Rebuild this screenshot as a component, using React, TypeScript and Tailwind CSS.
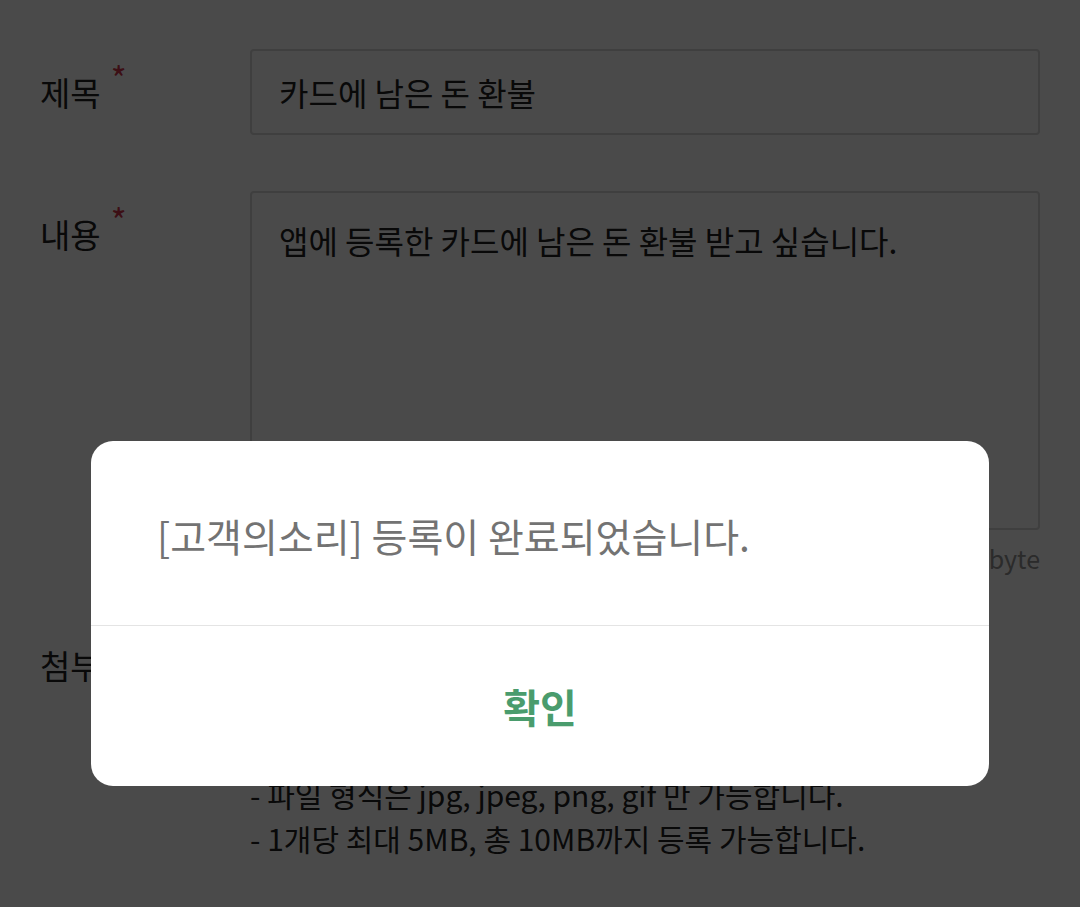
import React from "react";

const FONT = "font-['Noto_Sans_CJK_KR','Noto_Sans',sans-serif]";

function Label({ text, required }: { text: string; required?: boolean }) {
  return (
    <div className="w-[210px] shrink-0 pt-[22px] text-[33px] leading-[42px] text-[#222]">
      {text}
      {required && <span className="relative -top-[14px] ml-[10px] text-[34px] text-[#d0344a]">*</span>}
    </div>
  );
}

export default function App() {
  return (
    <div className={`${FONT} relative min-h-[907px] w-full overflow-hidden bg-white`}>
      {/* form behind the dialog */}
      <div className="flex flex-col px-[40px] pt-[49px]">
        <div className="flex">
          <Label text="제목" required />
          <div className="flex h-[86px] flex-1 items-center rounded-[4px] border-2 border-[#d8d8d8] px-[27px] text-[32px] text-[#222]">
            카드에 남은 돈 환불
          </div>
        </div>

        <div className="mt-[56px] flex">
          <Label text="내용" required />
          <div className="flex flex-1 flex-col">
            <div className="h-[339px] rounded-[4px] border-2 border-[#d8d8d8] px-[27px] pt-[25px] text-[32px] leading-[44px] text-[#222]">
              앱에 등록한 카드에 남은 돈 환불 받고 싶습니다.
            </div>
            <div className="mt-[12px] text-right text-[25px] leading-[32px] text-[#939393]">
              25 / 2000byte
            </div>
          </div>
        </div>

        <div className="mt-[70px] flex">
          <div className="w-[210px] shrink-0 text-[33px] leading-[42px] text-[#222]">첨부파일</div>
          <div className="flex flex-1 flex-col">
            <div className="flex gap-[16px]">
              {[0, 1, 2].map((i) => (
                <div key={i} className="h-[80px] w-[80px] rounded-[4px] border-2 border-[#d8d8d8]" />
              ))}
            </div>
            <div className="mt-[48px] text-[30px] leading-[44px] text-[#222]">
              <p>- 파일 형식은 jpg, jpeg, png, gif 만 가능합니다.</p>
              <p>- 1개당 최대 5MB, 총 10MB까지 등록 가능합니다.</p>
            </div>
          </div>
        </div>
      </div>

      {/* dim + alert */}
      <div className="absolute inset-0 flex justify-center bg-black/[0.71] pt-[441px]">
        <div className="h-[345px] w-[898px] overflow-hidden rounded-[22px] bg-white">
          <div className="flex h-[185px] items-center border-b border-[#e4e4e4] px-[66px] pt-[4px] text-[39px] text-[#737373]">
            [고객의소리] 등록이 완료되었습니다.
          </div>
          <div className="flex h-[159px] items-center justify-center text-[40px] font-bold text-[#4a9c6d]">
            확인
          </div>
        </div>
      </div>
    </div>
  );
}
